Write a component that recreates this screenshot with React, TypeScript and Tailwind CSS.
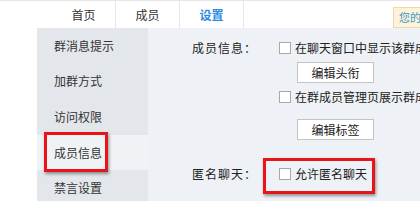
const menu = ['群消息提示', '加群方式', '访问权限', '成员信息', '禁言设置']
const tabs = ['首页', '成员', '设置']

function Check({ label }: { label: string }) {
  return (
    <div className="flex items-center h-[18px] whitespace-nowrap">
      <span className="w-[12px] h-[12px] border border-[#a8a8a8] bg-white shrink-0" />
      <span className="ml-[4px] text-[12px] text-[#222]">{label}</span>
    </div>
  )
}

function Btn({ label }: { label: string }) {
  return (
    <div className="ml-[18px] w-[77px] h-[21px] border border-[#c4c4c4] bg-white flex items-center justify-center text-[12px] text-[#222]">
      {label}
    </div>
  )
}

export default function App() {
  return (
    <div
      className="w-[420px] h-[201px] overflow-hidden bg-white flex flex-col"
      style={{ fontFamily: '"Noto Sans CJK SC", "Noto Sans", sans-serif' }}
    >
      <div className="h-[28px] shrink-0 flex border-t border-[#e6e6e6] bg-white">
        <div className="w-[52px] shrink-0" />
        {tabs.map((t, i) => (
          <div
            key={t}
            className={`w-[64px] shrink-0 flex items-center justify-center text-[12px] border-r border-[#e8e8e8] ${
              i === 2 ? 'text-[#2b8ae0] font-bold' : 'text-[#333]'
            }`}
          >
            {t}
          </div>
        ))}
        <div className="flex-1" />
        <div className="mt-[6px] h-[21px] shrink-0 pl-[5px] w-[27px] bg-[#fdf2db] border border-[#f2d8a6] border-r-0 text-[11px] leading-[19px] text-[#3a9bc8] whitespace-nowrap overflow-hidden">
          您的
        </div>
      </div>
      <div className="flex flex-1">
        <div className="w-[37px] shrink-0 bg-white" />
        <div className="w-[111px] shrink-0 bg-[#e3e7ec] flex flex-col relative">
          {menu.map((m, i) => (
            <div
              key={m}
              className={`h-[35.6px] shrink-0 flex items-center pl-[17px] text-[12px] text-[#333] whitespace-nowrap ${
                i === 3 ? 'bg-[#f0f3f6]' : ''
              }`}
            >
              {m}
            </div>
          ))}
          <div className="absolute left-[7px] top-[104px] w-[64px] h-[40px] border-[3px] border-[#e8141a] shadow-[1px_2px_3px_rgba(0,0,0,0.4)]" />
        </div>
        <div className="flex-1 min-w-0 bg-[#eef2f6] pl-[44px] pt-[11px] relative overflow-hidden">
          <div className="flex">
            <div className="w-[87px] shrink-0 text-[12px] text-[#222] h-[18px] flex items-center tracking-[1px] whitespace-nowrap">成员信息：</div>
            <div className="flex flex-col shrink-0">
              <Check label="在聊天窗口中显示该群成员头衔" />
              <div className="mt-[5px]">
                <Btn label="编辑头衔" />
              </div>
              <div className="mt-[5px]">
                <Check label="在群成员管理页展示群成员标签" />
              </div>
              <div className="mt-[13px]">
                <Btn label="编辑标签" />
              </div>
            </div>
          </div>
          <div className="flex mt-[25px]">
            <div className="w-[87px] shrink-0 text-[12px] text-[#222] h-[18px] flex items-center tracking-[1px] whitespace-nowrap">匿名聊天：</div>
            <Check label="允许匿名聊天" />
          </div>
          <div className="absolute left-[115px] top-[130px] w-[112px] h-[36px] border-[3px] border-[#e8141a] shadow-[1px_2px_3px_rgba(0,0,0,0.4)]" />
        </div>
      </div>
    </div>
  )
}
